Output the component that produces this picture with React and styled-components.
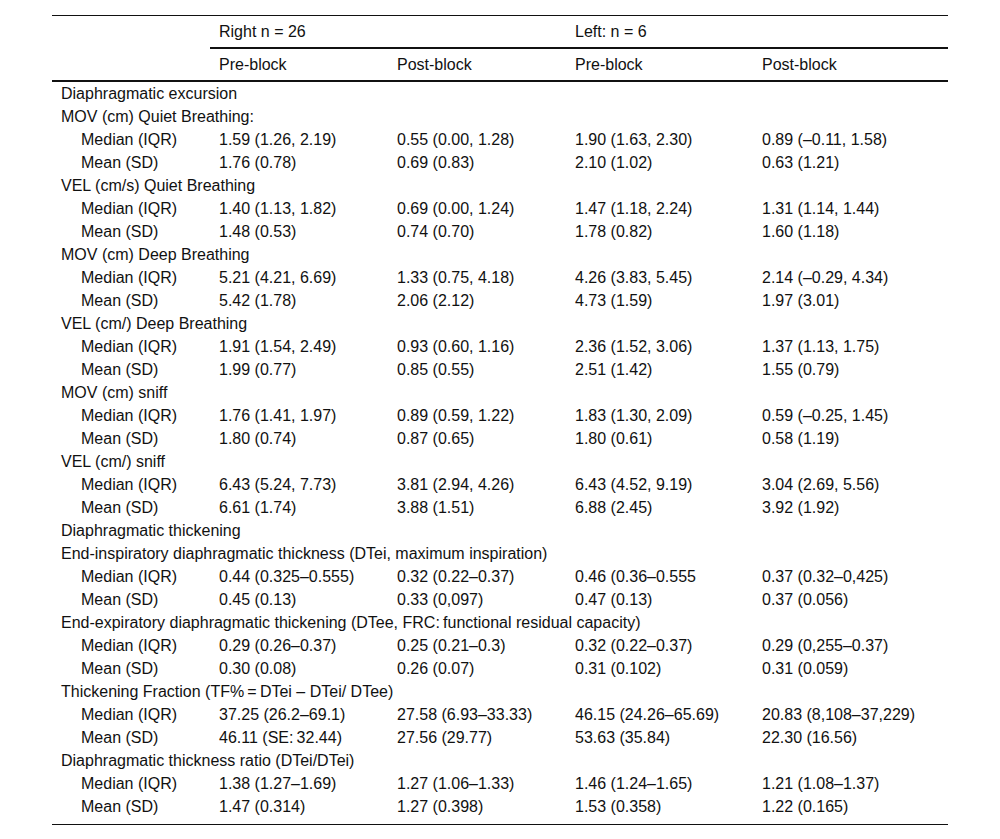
import styled, { createGlobalStyle } from "styled-components";

const GlobalStyle = createGlobalStyle`
  body {
    margin: 0;
    background: #ffffff;
    font-family: "Liberation Sans", Arial, sans-serif;
    color: #111111;
  }
`;

const Page = styled.div`
  padding: 15px 52px 0 52px;
`;

const Table = styled.table`
  width: 896px;
  border-collapse: collapse;
  font-size: 16px;
  line-height: 23px;
  border-top: 1px solid #111111;
  border-bottom: 1px solid #111111;
`;

const Col = styled.col`
  width: ${(p) => p.w}px;
`;

const HeadCell = styled.th`
  font-weight: normal;
  text-align: left;
  padding: 0 9px;
  height: ${(p) => p.h}px;
  border-bottom: ${(p) => (p.rule ? "2px solid #111111" : "none")};
`;

const Cell = styled.td`
  padding: 0 9px 0 ${(p) => (p.indent ? 29 : 9)}px;
  height: 23px;
  white-space: nowrap;
`;

const LastRow = styled.tr`
  td {
    padding-bottom: 6px;
  }
`;

const rows = [
  { label: "Diaphragmatic excursion" },
  { label: "MOV (cm) Quiet Breathing:" },
  { sub: "Median (IQR)", v: ["1.59 (1.26, 2.19)", "0.55 (0.00, 1.28)", "1.90 (1.63, 2.30)", "0.89 (–0.11, 1.58)"] },
  { sub: "Mean (SD)", v: ["1.76 (0.78)", "0.69 (0.83)", "2.10 (1.02)", "0.63 (1.21)"] },
  { label: "VEL (cm/s) Quiet Breathing" },
  { sub: "Median (IQR)", v: ["1.40 (1.13, 1.82)", "0.69 (0.00, 1.24)", "1.47 (1.18, 2.24)", "1.31 (1.14, 1.44)"] },
  { sub: "Mean (SD)", v: ["1.48 (0.53)", "0.74 (0.70)", "1.78 (0.82)", "1.60 (1.18)"] },
  { label: "MOV (cm) Deep Breathing" },
  { sub: "Median (IQR)", v: ["5.21 (4.21, 6.69)", "1.33 (0.75, 4.18)", "4.26 (3.83, 5.45)", "2.14 (–0.29, 4.34)"] },
  { sub: "Mean (SD)", v: ["5.42 (1.78)", "2.06 (2.12)", "4.73 (1.59)", "1.97 (3.01)"] },
  { label: "VEL (cm/) Deep Breathing" },
  { sub: "Median (IQR)", v: ["1.91 (1.54, 2.49)", "0.93 (0.60, 1.16)", "2.36 (1.52, 3.06)", "1.37 (1.13, 1.75)"] },
  { sub: "Mean (SD)", v: ["1.99 (0.77)", "0.85 (0.55)", "2.51 (1.42)", "1.55 (0.79)"] },
  { label: "MOV (cm) sniff" },
  { sub: "Median (IQR)", v: ["1.76 (1.41, 1.97)", "0.89 (0.59, 1.22)", "1.83 (1.30, 2.09)", "0.59 (–0.25, 1.45)"] },
  { sub: "Mean (SD)", v: ["1.80 (0.74)", "0.87 (0.65)", "1.80 (0.61)", "0.58 (1.19)"] },
  { label: "VEL (cm/) sniff" },
  { sub: "Median (IQR)", v: ["6.43 (5.24, 7.73)", "3.81 (2.94, 4.26)", "6.43 (4.52, 9.19)", "3.04 (2.69, 5.56)"] },
  { sub: "Mean (SD)", v: ["6.61 (1.74)", "3.88 (1.51)", "6.88 (2.45)", "3.92 (1.92)"] },
  { label: "Diaphragmatic thickening" },
  { label: "End-inspiratory diaphragmatic thickness (DTei, maximum inspiration)" },
  { sub: "Median (IQR)", v: ["0.44 (0.325–0.555)", "0.32 (0.22–0.37)", "0.46 (0.36–0.555", "0.37 (0.32–0,425)"] },
  { sub: "Mean (SD)", v: ["0.45 (0.13)", "0.33 (0,097)", "0.47 (0.13)", "0.37 (0.056)"] },
  { label: "End-expiratory diaphragmatic thickening (DTee, FRC:\u2009functional residual capacity)" },
  { sub: "Median (IQR)", v: ["0.29 (0.26–0.37)", "0.25 (0.21–0.3)", "0.32 (0.22–0.37)", "0.29 (0,255–0.37)"] },
  { sub: "Mean (SD)", v: ["0.30 (0.08)", "0.26 (0.07)", "0.31 (0.102)", "0.31 (0.059)"] },
  { label: "Thickening Fraction (TF%\u2009=\u2009DTei – DTei/ DTee)" },
  { sub: "Median (IQR)", v: ["37.25 (26.2–69.1)", "27.58 (6.93–33.33)", "46.15 (24.26–65.69)", "20.83 (8,108–37,229)"] },
  { sub: "Mean (SD)", v: ["46.11 (SE:\u200932.44)", "27.56 (29.77)", "53.63 (35.84)", "22.30 (16.56)"] },
  { label: "Diaphragmatic thickness ratio (DTei/DTei)" },
  { sub: "Median (IQR)", v: ["1.38 (1.27–1.69)", "1.27 (1.06–1.33)", "1.46 (1.24–1.65)", "1.21 (1.08–1.37)"] },
  { sub: "Mean (SD)", v: ["1.47 (0.314)", "1.27 (0.398)", "1.53 (0.358)", "1.22 (0.165)"] },
];

function Row({ row }) {
  if (row.label) {
    return (
      <tr>
        <Cell colSpan={5}>{row.label}</Cell>
      </tr>
    );
  }
  return (
    <>
      <Cell indent>{row.sub}</Cell>
      {row.v.map((val, i) => (
        <Cell key={i}>{val}</Cell>
      ))}
    </>
  );
}

export default function App() {
  return (
    <Page>
      <GlobalStyle />
      <Table>
        <colgroup>
          <Col w={158} />
          <Col w={178} />
          <Col w={178} />
          <Col w={187} />
          <Col w={195} />
        </colgroup>
        <thead>
          <tr>
            <HeadCell h={31} />
            <HeadCell h={31} colSpan={2} rule>
              Right n = 26
            </HeadCell>
            <HeadCell h={31} colSpan={2} rule>
              Left: n = 6
            </HeadCell>
          </tr>
          <tr>
            <HeadCell h={31} rule />
            <HeadCell h={31} rule>Pre-block</HeadCell>
            <HeadCell h={31} rule>Post-block</HeadCell>
            <HeadCell h={31} rule>Pre-block</HeadCell>
            <HeadCell h={31} rule>Post-block</HeadCell>
          </tr>
        </thead>
        <tbody>
          {rows.map((row, i) =>
            row.label ? (
              <Row key={i} row={row} />
            ) : i === rows.length - 1 ? (
              <LastRow key={i}>
                <Row row={row} />
              </LastRow>
            ) : (
              <tr key={i}>
                <Row row={row} />
              </tr>
            )
          )}
        </tbody>
      </Table>
    </Page>
  );
}
